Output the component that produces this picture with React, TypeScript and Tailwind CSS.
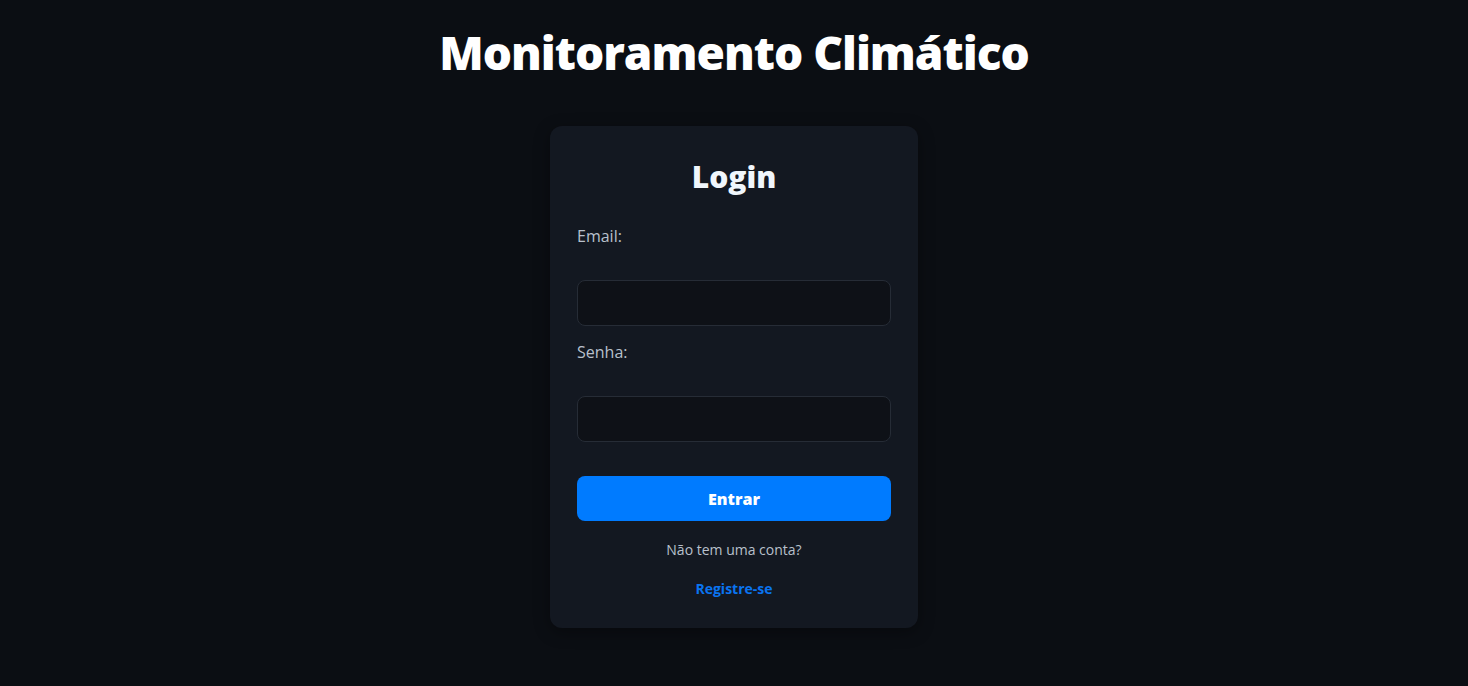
import React from "react";

export default function App() {
  return (
    <div
      className="min-h-screen w-full bg-[#0b0e13] flex flex-col items-center"
      style={{ fontFamily: '"Open Sans", "Noto Sans", sans-serif' }}
    >
      <h1 className="mt-[24px] text-[46px] leading-[56px] font-extrabold text-white tracking-[-1px]">
        Monitoramento Climático
      </h1>
      <div className="mt-[46px] w-[368px] rounded-xl bg-[#131821] px-[27px] pt-[31px] pb-[29px] shadow-[0_4px_16px_rgba(0,0,0,0.35)] flex flex-col">
        <h2 className="text-center text-[30px] leading-[40px] font-extrabold text-[#f0f6fc]">Login</h2>
        <label className="mt-[27px] text-[16px] leading-[24px] font-medium text-[#b8c0cc]">Email:</label>
        <input
          type="email"
          className="mt-[32px] h-[46px] w-full rounded-lg border border-[#262c36] bg-[#0e1117] px-3 text-white outline-none"
        />
        <label className="mt-[14px] text-[16px] leading-[24px] font-medium text-[#b8c0cc]">Senha:</label>
        <input
          type="password"
          className="mt-[32px] h-[46px] w-full rounded-lg border border-[#262c36] bg-[#0e1117] px-3 text-white outline-none"
        />
        <button className="mt-[34px] h-[45px] w-full rounded-lg bg-[#007bff] text-[16px] font-extrabold text-white">
          Entrar
        </button>
        <p className="mt-[19px] text-center text-[14px] leading-[20px] text-[#b8c0cc]">Não tem uma conta?</p>
        <a className="mt-[19px] text-center text-[14px] leading-[20px] font-bold text-[#0a74f0] cursor-pointer">
          Registre-se
        </a>
      </div>
    </div>
  );
}
